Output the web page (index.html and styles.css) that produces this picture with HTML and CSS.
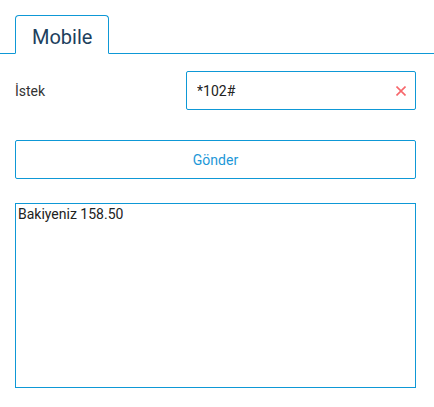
FILE: index.html
```html
<!DOCTYPE html>
<html lang="tr">
<head>
    <meta charset="UTF-8">
    <meta name="viewport" content="width=device-width, initial-scale=1.0">
    <title>Mobile</title>
    <link rel="stylesheet" href="styles.css">
</head>
<body>
    <ul class="nav-tabs">
        <li class="tab active">Mobile</li>
    </ul>

    <div class="panel">
        <div class="form-row">
            <label class="form-label" for="request">İstek</label>
            <div class="input-wrap">
                <input class="form-input" id="request" type="text" value="*102#">
                <button class="clear-btn" type="button" aria-label="Temizle">
                    <svg width="10" height="10" viewBox="0 0 10 10">
                        <path d="M0.5 0.5 L9.5 9.5 M9.5 0.5 L0.5 9.5" stroke="#f7676b" stroke-width="1.6" fill="none"/>
                    </svg>
                </button>
            </div>
        </div>

        <button class="send-btn" type="button">Gönder</button>

        <textarea class="result" readonly>Bakiyeniz 158.50</textarea>
    </div>
</body>
</html>
```

FILE: styles.css
```css
* {
    margin: 0;
    padding: 0;
    box-sizing: border-box;
}

body {
    font-family: 'Roboto', 'Liberation Sans', sans-serif;
    font-size: 14px;
    color: #222;
    background: #fff;
}

.nav-tabs {
    list-style: none;
    display: flex;
    padding: 15px 0 0 15px;
    border-bottom: 1px solid #0e98d6;
}

.tab {
    font-size: 20px;
    line-height: 24px;
    color: #1d3f5e;
    padding: 9px 16px 4px;
    margin-bottom: -1px;
    border: 1px solid #0e98d6;
    border-bottom-color: #fff;
    border-radius: 4px 4px 0 0;
    background: #fff;
}

.panel {
    padding: 17px 18px 0 15px;
}

.form-row {
    display: grid;
    grid-template-columns: 171px 1fr;
    align-items: center;
}

.form-label {
    font-size: 14px;
    color: #333;
}

.input-wrap {
    position: relative;
}

.form-input {
    display: block;
    width: 100%;
    height: 39px;
    padding: 0 30px 0 10px;
    font-family: inherit;
    font-size: 14px;
    color: #222;
    border: 1px solid #0e98d6;
    border-radius: 2px;
    outline: none;
}

.clear-btn {
    position: absolute;
    right: 10px;
    top: 15px;
    width: 10px;
    height: 10px;
    border: none;
    background: none;
    cursor: pointer;
    display: flex;
}

.send-btn {
    display: block;
    width: 100%;
    height: 39px;
    margin-top: 30px;
    font-family: inherit;
    font-size: 14px;
    color: #1d98d8;
    background: #fff;
    border: 1px solid #0e98d6;
    border-radius: 2px;
    cursor: pointer;
}

.result {
    display: block;
    width: 100%;
    height: 185px;
    margin-top: 24px;
    padding: 2px;
    font-family: inherit;
    font-size: 14px;
    color: #222;
    border: 1px solid #0e98d6;
    resize: none;
    outline: none;
}
```
